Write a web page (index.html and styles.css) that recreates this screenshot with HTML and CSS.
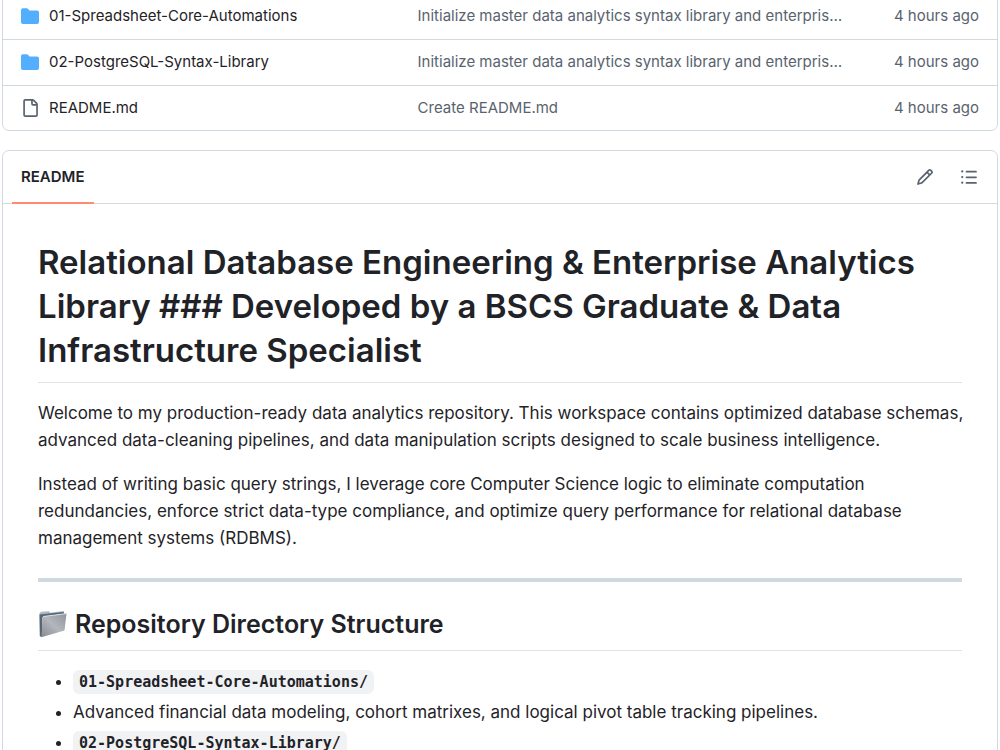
FILE: index.html
```html
<!DOCTYPE html>
<html lang="en">
<head>
<meta charset="utf-8">
<meta name="viewport" content="width=device-width, initial-scale=1">
<title>Repository</title>
<link rel="stylesheet" href="styles.css">
</head>
<body>
<main class="page">
  <div class="box files">
    <table class="file-table">
      <colgroup><col class="col-name"><col class="col-message"><col class="col-date"></colgroup>
      <tbody>
        <tr>
          <td><div class="file-name"><svg class="icon folder" viewBox="0 0 16 16" aria-hidden="true"><path d="M1.75 1A1.75 1.75 0 0 0 0 2.75v10.5C0 14.216.784 15 1.75 15h12.5A1.75 1.75 0 0 0 16 13.25v-8.5A1.75 1.75 0 0 0 14.25 3H7.5a.25.25 0 0 1-.2-.1l-.9-1.2C6.07 1.26 5.55 1 5 1H1.75Z"/></svg><a href="#">01-Spreadsheet-Core-Automations</a></div></td>
          <td class="muted"><a href="#">Initialize master data analytics syntax library and enterpris…</a></td>
          <td class="muted date">4 hours ago</td>
        </tr>
        <tr>
          <td><div class="file-name"><svg class="icon folder" viewBox="0 0 16 16" aria-hidden="true"><path d="M1.75 1A1.75 1.75 0 0 0 0 2.75v10.5C0 14.216.784 15 1.75 15h12.5A1.75 1.75 0 0 0 16 13.25v-8.5A1.75 1.75 0 0 0 14.25 3H7.5a.25.25 0 0 1-.2-.1l-.9-1.2C6.07 1.26 5.55 1 5 1H1.75Z"/></svg><a href="#">02-PostgreSQL-Syntax-Library</a></div></td>
          <td class="muted"><a href="#">Initialize master data analytics syntax library and enterpris…</a></td>
          <td class="muted date">4 hours ago</td>
        </tr>
        <tr>
          <td><div class="file-name"><svg class="icon" viewBox="0 0 16 16" aria-hidden="true"><path d="M2 1.75C2 .784 2.784 0 3.75 0h6.586c.464 0 .909.184 1.237.513l2.914 2.914c.329.328.513.773.513 1.237v9.586A1.75 1.75 0 0 1 13.25 16h-9.5A1.75 1.75 0 0 1 2 14.25Zm1.75-.25a.25.25 0 0 0-.25.25v12.5c0 .138.112.25.25.25h9.5a.25.25 0 0 0 .25-.25V6h-2.75A1.75 1.75 0 0 1 9 4.25V1.5Zm6.75.062V4.25c0 .138.112.25.25.25h2.688l-.011-.013-2.914-2.914-.013-.011Z"/></svg><a href="#">README.md</a></div></td>
          <td class="muted"><a href="#">Create README.md</a></td>
          <td class="muted date">4 hours ago</td>
        </tr>
      </tbody>
    </table>
  </div>

  <section class="box readme">
    <header class="readme-bar">
      <nav class="tabs"><a class="tab" href="#">README</a></nav>
      <div class="actions">
        <button type="button" class="icon-button" aria-label="Edit file"><svg class="icon" viewBox="0 0 16 16" aria-hidden="true"><path d="M11.013 1.427a1.75 1.75 0 0 1 2.474 0l1.086 1.086a1.75 1.75 0 0 1 0 2.474l-8.61 8.61c-.21.21-.47.364-.756.445l-3.251.93a.75.75 0 0 1-.927-.928l.929-3.25c.081-.286.235-.547.445-.758l8.61-8.61Zm.176 4.823L9.75 4.81l-6.286 6.287a.253.253 0 0 0-.064.108l-.558 1.953 1.953-.558a.253.253 0 0 0 .108-.064Zm1.238-3.763a.25.25 0 0 0-.354 0L10.811 3.75l1.439 1.44 1.263-1.263a.25.25 0 0 0 0-.354Z"/></svg></button>
        <button type="button" class="icon-button" aria-label="Outline"><svg class="icon" viewBox="0 0 16 16" aria-hidden="true"><path d="M5.75 2.5h8.5a.75.75 0 0 1 0 1.5h-8.5a.75.75 0 0 1 0-1.5Zm0 5h8.5a.75.75 0 0 1 0 1.5h-8.5a.75.75 0 0 1 0-1.5Zm0 5h8.5a.75.75 0 0 1 0 1.5h-8.5a.75.75 0 0 1 0-1.5ZM2 14a1 1 0 1 1 0-2 1 1 0 0 1 0 2Zm1-6a1 1 0 1 1-2 0 1 1 0 0 1 2 0ZM2 4a1 1 0 1 1 0-2 1 1 0 0 1 0 2Z"/></svg></button>
      </div>
    </header>
    <article class="markdown">
      <h1>Relational Database Engineering &amp; Enterprise Analytics Library ### Developed by a BSCS Graduate &amp; Data Infrastructure Specialist</h1>
      <p>Welcome to my production-ready data analytics repository. This workspace contains optimized database schemas, advanced data-cleaning pipelines, and data manipulation scripts designed to scale business intelligence.</p>
      <p>Instead of writing basic query strings, I leverage core Computer Science logic to eliminate computation redundancies, enforce strict data-type compliance, and optimize query performance for relational database management systems (RDBMS).</p>
      <hr>
      <h2><svg class="heading-folder" viewBox="0 0 30 28" aria-hidden="true">
        <defs><linearGradient id="folderFront" x1="0" y1="1" x2="1" y2="0"><stop offset="0" stop-color="#868b93"/><stop offset=".5" stop-color="#b3b7bc"/><stop offset="1" stop-color="#8f959c"/></linearGradient></defs>
        <path d="M1.500 3.500 3 1.800l8-.6 1.200 1.500L26 1v4L4 27l-2-.8Z" fill="#a6bac6"/>
        <path d="M1.500 4.500 25.500 2l.5 2L4 7v20l-2.200-1Z" fill="#59656f"/>
        <path d="M5.200 6.500 28.500 3.600 26.500 20.500 3.300 27.300Z" fill="url(#folderFront)"/>
        <path d="M5.200 6.500 28.500 3.600" stroke="#dce2e6" stroke-width="1" fill="none"/>
      </svg>Repository Directory Structure</h2>
      <ul>
        <li><strong><code>01-Spreadsheet-Core-Automations/</code></strong></li>
        <li>Advanced financial data modeling, cohort matrixes, and logical pivot table tracking pipelines.</li>
        <li><strong><code>02-PostgreSQL-Syntax-Library/</code></strong></li>
      </ul>
    </article>
  </section>
</main>
</body>
</html>
```
FILE: styles.css
```css
* { box-sizing: border-box; }
body {
  margin: 0;
  height: 100vh;
  overflow: hidden;
  background: #fff;
  color: #1f2328;
  font-family: Inter, "Liberation Sans", sans-serif;
  font-size: 17px;
  line-height: 27px;
}
a { color: inherit; text-decoration: none; }
.page { padding: 0 2px; }
.box { border: 1px solid #d1d9e0; border-radius: 7px; }
.files { margin-top: -8px; overflow: hidden; }
.file-table {
  width: 100%;
  table-layout: fixed;
  border-collapse: separate;
  border-spacing: 0;
  font-size: 15px;
  line-height: 20px;
}
.col-name { width: 40%; }
.col-date { width: 13%; }
.file-table td { height: 46px; padding: 0 18px 1px; white-space: nowrap; }
.file-table td.muted { padding-left: 17px; color: #59636e; }
.file-table tr + tr td { border-top: 1px solid #d1d9e0; }
.file-table tr:last-child td { height: 45px; }
.file-table td.date { padding-left: 0; text-align: right; }
.file-name { display: flex; align-items: center; gap: 10px; }
.icon { width: 18px; height: 18px; flex: none; display: block; fill: #59636e; }
.icon.folder { fill: #54aeff; }

.readme { margin-top: 19px; }
.readme-bar {
  display: flex;
  justify-content: space-between;
  height: 53px;
  padding: 0 19px 0 9px;
  border-bottom: 1px solid #d1d9e0;
}
.tabs { display: flex; }
.tab {
  display: flex;
  align-items: center;
  height: 53px;
  padding: 0 9px;
  border-bottom: 2px solid #fd8c73;
  font-size: 15px;
  font-weight: 600;
}
.actions { display: flex; align-items: center; gap: 26px; }
.icon-button { padding: 0; border: 0; background: none; }

.markdown { padding: 36px 35px; }
h1, h2 { margin: 0; border-bottom: 1px solid #dfe4e9; font-weight: 600; }
h1 { margin-bottom: 17px; padding-bottom: 10px; font-size: 33px; line-height: 44px; }
p { margin: 0 -4px 17px 0; }
hr { height: 4px; margin: 26px 0 25px; border: 0; background: #d1d9e0; }
h2 {
  display: flex;
  align-items: center;
  gap: 7px;
  margin-bottom: 17px;
  padding-bottom: 9px;
  font-size: 25px;
  line-height: 34px;
}
.heading-folder { width: 30px; height: 28px; }
ul { margin: 0; padding-left: 35px; }
li + li { margin-top: 3px; }
code {
  padding: 3px 6px;
  border-radius: 6px;
  background: #f1f2f4;
  font-family: "DejaVu Sans Mono", "Liberation Mono", monospace;
  font-size: 15px;
}
```
